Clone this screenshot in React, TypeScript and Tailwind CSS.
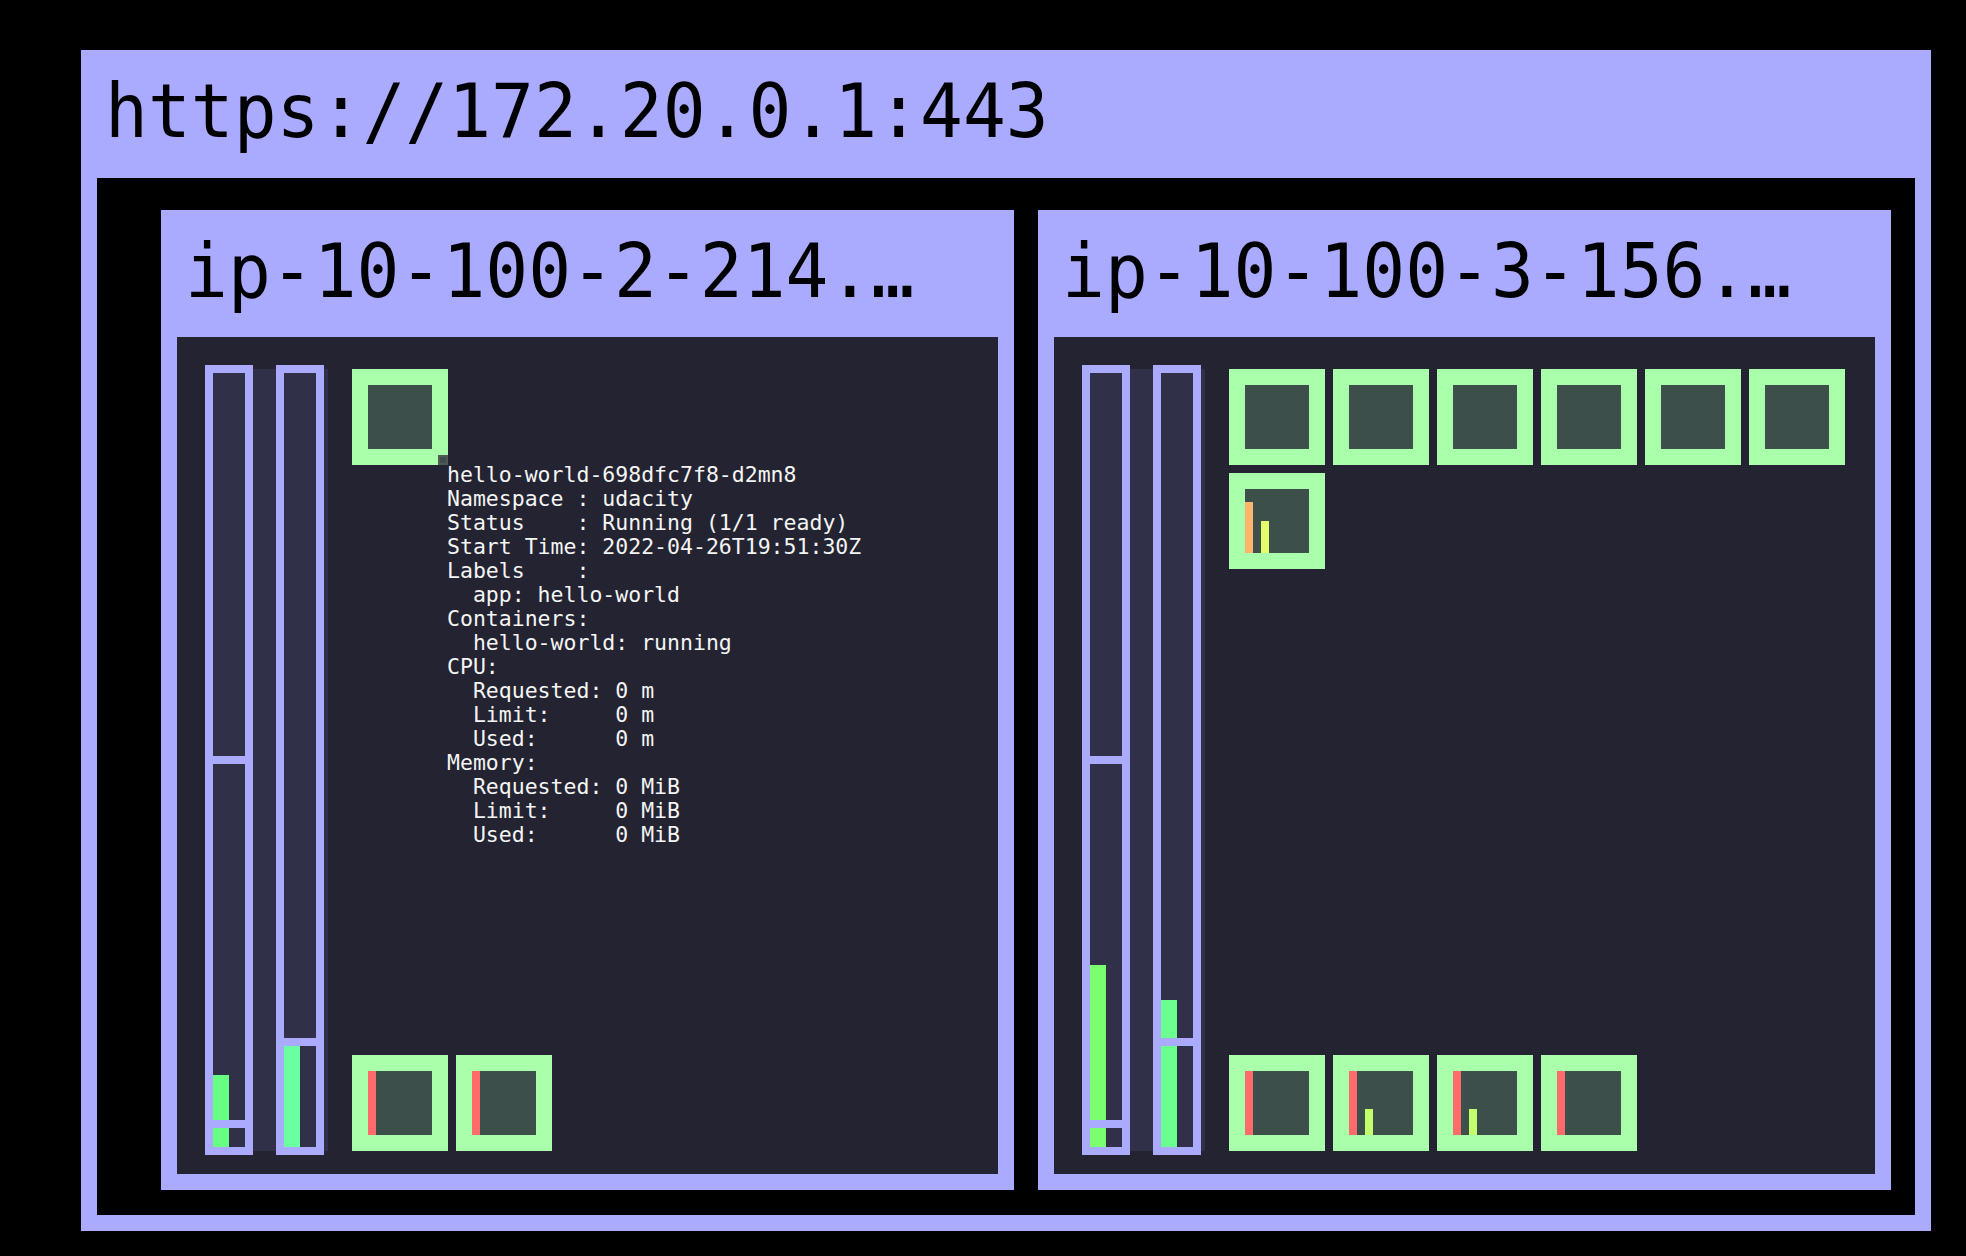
import React from 'react'

type Fill = { height: number; color: string }
type BarData = { fill: Fill; dividers: number[] }
type PodBar = { left: number; height: number; color: string }

const tooltipLines = [
  'hello-world-698dfc7f8-d2mn8',
  'Namespace : udacity',
  'Status    : Running (1/1 ready)',
  'Start Time: 2022-04-26T19:51:30Z',
  'Labels    :',
  '  app: hello-world',
  'Containers:',
  '  hello-world: running',
  'CPU:',
  '  Requested: 0 m',
  '  Limit:     0 m',
  '  Used:      0 m',
  'Memory:',
  '  Requested: 0 MiB',
  '  Limit:     0 MiB',
  '  Used:      0 MiB',
]

const nodes = [
  {
    name: 'ip-10-100-2-214.…',
    bars: [
      { fill: { height: 72, color: 'bg-[#66ff84]' }, dividers: [383, 747] },
      { fill: { height: 101, color: 'bg-[#6affa0]' }, dividers: [665] },
    ] as BarData[],
    top: [{ bars: [] as PodBar[], tip: true }],
    bottom: [
      { bars: [{ left: 0, height: 64, color: 'bg-[#ff6b6b]' }] },
      { bars: [{ left: 0, height: 64, color: 'bg-[#ff6b6b]' }] },
    ],
  },
  {
    name: 'ip-10-100-3-156.…',
    bars: [
      { fill: { height: 182, color: 'bg-[#7aff6e]' }, dividers: [383, 747] },
      { fill: { height: 147, color: 'bg-[#6aff8e]' }, dividers: [665] },
    ] as BarData[],
    top: [
      { bars: [] as PodBar[] },
      { bars: [] as PodBar[] },
      { bars: [] as PodBar[] },
      { bars: [] as PodBar[] },
      { bars: [] as PodBar[] },
      { bars: [] as PodBar[] },
      {
        bars: [
          { left: 0, height: 51, color: 'bg-[#ffb36b]' },
          { left: 16, height: 32, color: 'bg-[#e5ff6b]' },
        ],
      },
    ],
    bottom: [
      { bars: [{ left: 0, height: 64, color: 'bg-[#ff6b6b]' }] },
      {
        bars: [
          { left: 0, height: 64, color: 'bg-[#ff6b6b]' },
          { left: 16, height: 26, color: 'bg-[#c4ff6b]' },
        ],
      },
      {
        bars: [
          { left: 0, height: 64, color: 'bg-[#ff6b6b]' },
          { left: 16, height: 26, color: 'bg-[#c4ff6b]' },
        ],
      },
      { bars: [{ left: 0, height: 64, color: 'bg-[#ff6b6b]' }] },
    ],
  },
]

function Bar({ bar }: { bar: BarData }) {
  return (
    <div className="relative w-[48px] h-[790px] border-[8px] border-[#aaaaff] bg-[#303148]">
      <div
        className={`absolute bottom-0 left-0 w-[16px] ${bar.fill.color}`}
        style={{ height: bar.fill.height }}
      />
      {bar.dividers.map((d) => (
        <div key={d} className="absolute left-0 right-0 h-[8px] bg-[#aaaaff]" style={{ top: d }} />
      ))}
    </div>
  )
}

function Pod({ bars, tip }: { bars: PodBar[]; tip?: boolean }) {
  return (
    <div className="relative w-[96px] h-[96px] border-[16px] border-[#aaffaa] bg-[#3d4f4b]">
      {bars.map((b, i) => (
        <div
          key={i}
          className={`absolute bottom-0 w-[8px] ${b.color}`}
          style={{ left: b.left, height: b.height }}
        />
      ))}
      {tip && (
        <>
          <div className="absolute left-[70px] top-[70px] w-[10px] h-[10px] bg-[#3d4f4b] border-2 border-[#4f5a57]" />
          <div className="absolute left-[79px] top-[78px] z-10 whitespace-pre font-['DejaVu_Sans_Mono',monospace] text-[21.5px] leading-[24px] text-[#f4f4f4]">
            {tooltipLines.join('\n')}
          </div>
        </>
      )}
    </div>
  )
}

function Heading({ children }: { children: React.ReactNode }) {
  return (
    <span className="-mt-[11px] block origin-left scale-x-[0.95] whitespace-nowrap font-['DejaVu_Sans_Mono',monospace] text-[75px] leading-normal text-black">
      {children}
    </span>
  )
}

function NodePanel({ node }: { node: (typeof nodes)[number] }) {
  return (
    <div className="w-[853px] h-[980px] bg-[#aaaaff] p-[16px] flex flex-col">
      <div className="h-[111px] pl-[8px] overflow-hidden">
        <Heading>{node.name}</Heading>
      </div>
      <div className="flex-1 bg-[#232332] pt-[28px] pl-[32px] flex gap-[24px]">
        <div className="mt-[4px] h-[782px] w-[119px] bg-[#303148]">
          <div className="-mt-[4px] -ml-[4px] flex gap-[23px]">
            {node.bars.map((b, i) => (
              <Bar key={i} bar={b} />
            ))}
          </div>
        </div>
        <div className="mt-[4px] h-[782px] w-[616px] flex flex-col justify-between">
          <div className="flex flex-wrap gap-[8px]">
            {node.top.map((p, i) => (
              <Pod key={i} bars={p.bars} tip={'tip' in p ? p.tip : false} />
            ))}
          </div>
          <div className="flex gap-[8px]">
            {node.bottom.map((p, i) => (
              <Pod key={i} bars={p.bars} />
            ))}
          </div>
        </div>
      </div>
    </div>
  )
}

export default function App() {
  return (
    <div className="min-h-screen w-full bg-black pt-[50px] pl-[81px]">
      <div className="w-[1850px] h-[1181px] bg-[#aaaaff] p-[16px] flex flex-col">
        <div className="h-[112px] pl-[8px] overflow-hidden">
          <Heading>https://172.20.0.1:443</Heading>
        </div>
        <div className="flex-1 bg-black pt-[32px] pl-[64px] flex gap-[24px]">
          {nodes.map((n) => (
            <NodePanel key={n.name} node={n} />
          ))}
        </div>
      </div>
    </div>
  )
}
